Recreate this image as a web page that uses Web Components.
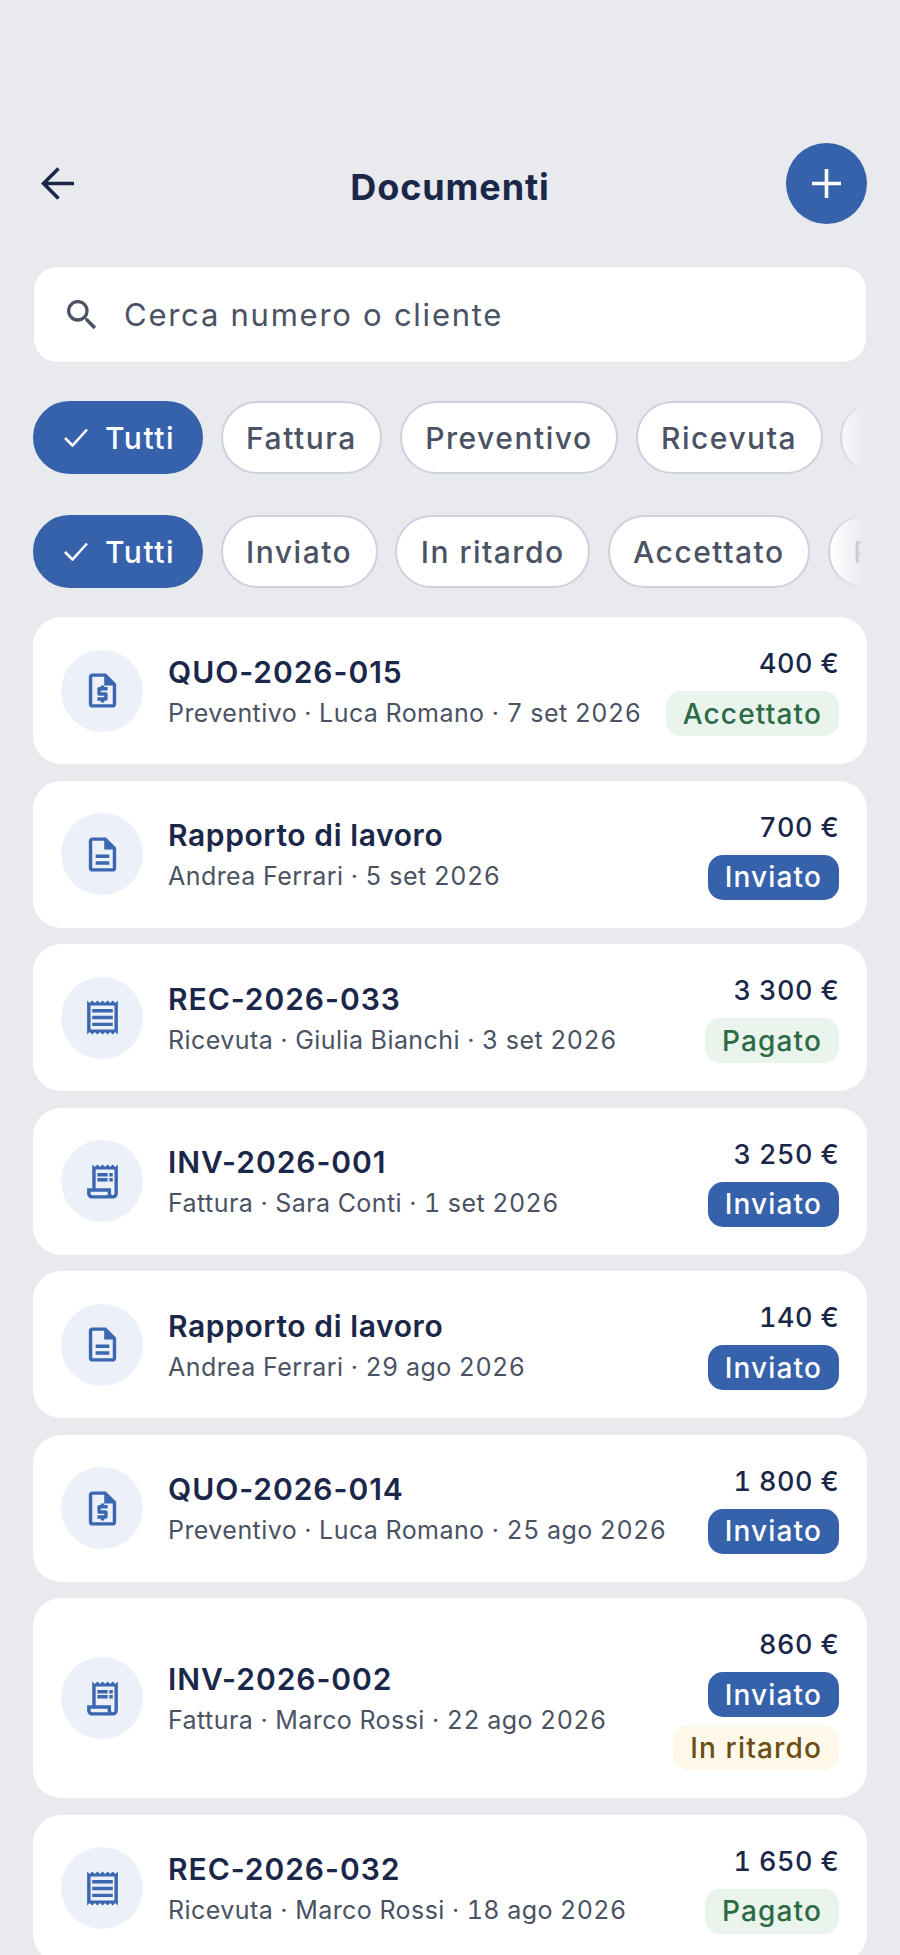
<!DOCTYPE html>
<html lang="it">
<head>
<meta charset="utf-8">
<title>Documenti</title>
<style>
  html, body { margin: 0; height: 1955px; overflow: hidden; background: #e8eaee; }
  body { font-family: Inter, "Liberation Sans", sans-serif; }
</style>
</head>
<body>
<doc-app>
  <doc-header slot="header" title="Documenti"></doc-header>
  <search-box slot="search" placeholder="Cerca numero o cliente"></search-box>
  <chip-row slot="filters">
    <filter-chip selected>Tutti</filter-chip>
    <filter-chip>Fattura</filter-chip>
    <filter-chip>Preventivo</filter-chip>
    <filter-chip>Ricevuta</filter-chip>
    <filter-chip>Rapporto</filter-chip>
  </chip-row>
  <chip-row slot="filters">
    <filter-chip selected>Tutti</filter-chip>
    <filter-chip>Inviato</filter-chip>
    <filter-chip>In ritardo</filter-chip>
    <filter-chip>Accettato</filter-chip>
    <filter-chip>Pagato</filter-chip>
  </chip-row>
  <doc-card code icon="quote" amount="400 €">
    <span slot="title">QUO-2026-015</span>
    <span slot="sub">Preventivo · Luca Romano · 7 set 2026</span>
    <status-badge slot="badges" kind="green">Accettato</status-badge>
  </doc-card>
  <doc-card icon="report" amount="700 €">
    <span slot="title">Rapporto di lavoro</span>
    <span slot="sub">Andrea Ferrari · 5 set 2026</span>
    <status-badge slot="badges" kind="blue">Inviato</status-badge>
  </doc-card>
  <doc-card code icon="receipt" amount="3 300 €">
    <span slot="title">REC-2026-033</span>
    <span slot="sub">Ricevuta · Giulia Bianchi · 3 set 2026</span>
    <status-badge slot="badges" kind="green">Pagato</status-badge>
  </doc-card>
  <doc-card code icon="invoice" amount="3 250 €">
    <span slot="title">INV-2026-001</span>
    <span slot="sub">Fattura · Sara Conti · 1 set 2026</span>
    <status-badge slot="badges" kind="blue">Inviato</status-badge>
  </doc-card>
  <doc-card icon="report" amount="140 €">
    <span slot="title">Rapporto di lavoro</span>
    <span slot="sub">Andrea Ferrari · 29 ago 2026</span>
    <status-badge slot="badges" kind="blue">Inviato</status-badge>
  </doc-card>
  <doc-card code icon="quote" amount="1 800 €">
    <span slot="title">QUO-2026-014</span>
    <span slot="sub">Preventivo · Luca Romano · 25 ago 2026</span>
    <status-badge slot="badges" kind="blue">Inviato</status-badge>
  </doc-card>
  <doc-card code icon="invoice" amount="860 €">
    <span slot="title">INV-2026-002</span>
    <span slot="sub">Fattura · Marco Rossi · 22 ago 2026</span>
    <status-badge slot="badges" kind="blue">Inviato</status-badge>
    <status-badge slot="badges" kind="yellow">In ritardo</status-badge>
  </doc-card>
  <doc-card code icon="receipt" amount="1 650 €">
    <span slot="title">REC-2026-032</span>
    <span slot="sub">Ricevuta · Marco Rossi · 18 ago 2026</span>
    <status-badge slot="badges" kind="green">Pagato</status-badge>
  </doc-card>
</doc-app>

<script>
const ICONS = {
  quote: `<path d="M14 2H6c-1.1 0-1.99.9-1.99 2L4 20c0 1.1.89 2 1.99 2H18c1.1 0 2-.9 2-2V8l-6-6zm4 18H6V4h7v5h5v11z"/><path d="M11 19h2v-1h1c.55 0 1-.45 1-1v-3c0-.55-.45-1-1-1h-3v-1h4v-2h-2V9h-2v1h-1c-.55 0-1 .45-1 1v3c0 .55.45 1 1 1h3v1H9v2h2v1z"/>`,
  report: `<path d="M8 16h8v2H8zm0-4h8v2H8zm6-10H6c-1.1 0-2 .9-2 2v16c0 1.1.89 2 1.99 2H18c1.1 0 2-.9 2-2V8l-6-6zm4 18H6V4h7v5h5v11z"/>`,
  receipt: `<path d="M19.5 3.5L18 2l-1.5 1.5L15 2l-1.5 1.5L12 2l-1.5 1.5L9 2 7.5 3.5 6 2 4.5 3.5 3 2v20l1.5-1.5L6 22l1.5-1.5L9 22l1.5-1.5L12 22l1.5-1.5L15 22l1.5-1.5L18 22l1.5-1.5L21 22V2l-1.5 1.5zM19 19.09H5V4.91h14v14.18zM6 15h12v2H6zm0-4h12v2H6zm0-4h12v2H6z"/>`,
  invoice: `<path d="M19.5 3.5L18 2l-1.5 1.5L15 2l-1.5 1.5L12 2l-1.5 1.5L9 2 7.5 3.5 6 2v14H3v3c0 1.66 1.34 3 3 3h12c1.66 0 3-1.34 3-3V2l-1.5 1.5zM15 20H6c-.55 0-1-.45-1-1v-1h10v2zm4-1c0 .55-.45 1-1 1s-1-.45-1-1v-3H8V5h11v14z"/><path d="M9 7h6v2H9zm7 0h2v2h-2zm-7 3h6v2H9zm7 0h2v2h-2z"/>`,
};

class DocApp extends HTMLElement {
  constructor() {
    super();
    this.attachShadow({ mode: "open" });
    this.shadowRoot.innerHTML = `
      <style>
        :host { display: flex; flex-direction: column; padding: 143px 33px 0; }
        .filters { display: flex; flex-direction: column; gap: 41px; margin: 38px 0 29px; }
        .list { display: flex; flex-direction: column; gap: 16.5px; }
      </style>
      <slot name="header"></slot>
      <div style="height:42px"></div>
      <slot name="search"></slot>
      <div class="filters"><slot name="filters"></slot></div>
      <div class="list"><slot></slot></div>`;
  }
}

class DocHeader extends HTMLElement {
  constructor() {
    super();
    this.attachShadow({ mode: "open" });
    this.shadowRoot.innerHTML = `
      <style>
        :host { display: grid; grid-template-columns: 81px 1fr 81px; align-items: center; height: 81px; }
        .back { display: block; margin-left: 8px; }
        h1 { margin: 7px 0 0; text-align: center; font-size: 36px; line-height: 44px; font-weight: 700; color: #1b2749; letter-spacing: .9px; }
        .add { width: 81px; height: 81px; border-radius: 50%; background: #3661ab; display: flex; align-items: center; justify-content: center; }
      </style>
      <svg class="back" width="33" height="33" viewBox="0 0 33 33" fill="none" stroke="#1b2749" stroke-width="3.6">
        <path d="M33 16.5H3M17.5 1.5L2.5 16.5l15 15"/>
      </svg>
      <h1>${this.getAttribute("title")}</h1>
      <div class="add">
        <svg width="29" height="29" viewBox="0 0 29 29" stroke="#fff" stroke-width="3.6"><path d="M14.5 0v29M0 14.5h29"/></svg>
      </div>`;
  }
}

class SearchBox extends HTMLElement {
  constructor() {
    super();
    this.attachShadow({ mode: "open" });
    this.shadowRoot.innerHTML = `
      <style>
        :host { display: flex; align-items: center; height: 97px; box-sizing: border-box; background: #fff; border: 1px solid #e2e5ea; border-radius: 24px; padding-left: 28px; color: #4a5263; }
        svg { flex: none; }
        span { margin-left: 22px; font-size: 31px; letter-spacing: 1.75px; }
      </style>
      <svg width="40" height="40" viewBox="0 0 24 24" fill="#4a5263"><path d="M15.5 14h-.79l-.28-.27A6.47 6.47 0 0 0 16 9.5 6.5 6.5 0 1 0 9.5 16c1.61 0 3.09-.59 4.23-1.57l.27.28v.79l5 4.99L20.49 19l-4.99-5zm-6 0C7.01 14 5 11.99 5 9.5S7.01 5 9.5 5 14 7.01 14 9.5 11.99 14 9.5 14z"/></svg>
      <span>${this.getAttribute("placeholder")}</span>`;
  }
}

class ChipRow extends HTMLElement {
  constructor() {
    super();
    this.attachShadow({ mode: "open" });
    this.shadowRoot.innerHTML = `
      <style>
        :host { display: block; position: relative; overflow: hidden; }
        .row { display: flex; gap: 17.5px; width: max-content; }
        .fade { position: absolute; top: 0; bottom: 0; right: 0; width: 36px; background: linear-gradient(to right, rgba(232,234,238,0), #e8eaee 90%); }
      </style>
      <div class="row"><slot></slot></div>
      <div class="fade"></div>`;
  }
}

class FilterChip extends HTMLElement {
  constructor() {
    super();
    this.attachShadow({ mode: "open" });
    const check = this.hasAttribute("selected")
      ? `<svg width="24" height="19" viewBox="0 0 24 19" fill="none" stroke="#fff" stroke-width="2.6"><path d="M1 10l7.5 7.5L23 1.5"/></svg>`
      : "";
    this.shadowRoot.innerHTML = `
      <style>
        :host { display: flex; align-items: center; gap: 17px; height: 73px; box-sizing: border-box; padding: 0 23.5px; border-radius: 37px; background: #fff; border: 2px solid #ccd1de; color: #4a5263; font-size: 30px; font-weight: 500; letter-spacing: 1.5px; }
        :host([selected]) { background: #3661ab; border-color: #3661ab; color: #fff; padding: 0 26px 0 29px; }
      </style>
      ${check}<slot></slot>`;
  }
}

class DocIcon extends HTMLElement {
  constructor() {
    super();
    this.attachShadow({ mode: "open" });
    this.shadowRoot.innerHTML = `
      <style>
        :host { display: flex; flex: none; align-items: center; justify-content: center; width: 82px; height: 82px; border-radius: 50%; background: #ebf0f9; }
      </style>
      <svg width="41" height="41" viewBox="0 0 24 24" fill="#3b66b0">${ICONS[this.getAttribute("name")]}</svg>`;
  }
}

class StatusBadge extends HTMLElement {
  constructor() {
    super();
    this.attachShadow({ mode: "open" });
    this.shadowRoot.innerHTML = `
      <style>
        :host { display: flex; align-items: center; height: 45px; padding: 0 17px; border-radius: 15px; font-size: 28px; font-weight: 500; letter-spacing: 1.15px; }
        :host([kind=blue]) { background: #3661ab; color: #fff; }
        :host([kind=green]) { background: #e8f4ec; color: #2d6a45; }
        :host([kind=yellow]) { background: #fdf8e8; color: #6b4e16; }
      </style>
      <slot></slot>`;
  }
}

class DocCard extends HTMLElement {
  constructor() {
    super();
    this.attachShadow({ mode: "open" });
    this.shadowRoot.innerHTML = `
      <style>
        :host { display: flex; align-items: center; padding: 28px 28px; background: #fff; border-radius: 28px; }
        .main { flex: 1; min-width: 0; margin-left: 25px; display: flex; flex-direction: column; gap: 4px; }
        .title { font-size: 30px; line-height: 40px; font-weight: 600; color: #1b2749; letter-spacing: .6px; }
        :host([code]) .title { letter-spacing: .95px; }
        .sub { font-size: 25px; line-height: 34px; color: #4a5263; letter-spacing: .44px; white-space: nowrap; font-variant-numeric: tabular-nums; }
        .side { display: flex; flex-direction: column; align-items: flex-end; gap: 8px; }
        .amount { font-size: 27px; line-height: 38px; font-weight: 500; color: #1b2749; letter-spacing: .4px; font-variant-numeric: tabular-nums; }
      </style>
      <doc-icon name="${this.getAttribute("icon")}"></doc-icon>
      <div class="main">
        <div class="title"><slot name="title"></slot></div>
        <div class="sub"><slot name="sub"></slot></div>
      </div>
      <div class="side">
        <div class="amount">${this.getAttribute("amount")}</div>
        <slot name="badges"></slot>
      </div>`;
  }
}

customElements.define("doc-icon", DocIcon);
customElements.define("doc-app", DocApp);
customElements.define("doc-header", DocHeader);
customElements.define("search-box", SearchBox);
customElements.define("chip-row", ChipRow);
customElements.define("filter-chip", FilterChip);
customElements.define("status-badge", StatusBadge);
customElements.define("doc-card", DocCard);
</script>
</body>
</html>
